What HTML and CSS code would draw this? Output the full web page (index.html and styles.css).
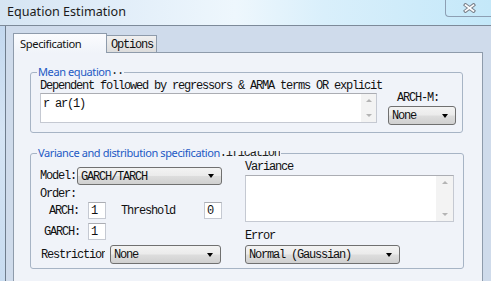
FILE: index.html
```html
<!DOCTYPE html>
<html>
<head>
<meta charset="utf-8">
<link rel="stylesheet" href="styles.css">
</head>
<body>
<div class="window">
  <div class="titlebar">
    <span class="title">Equation Estimation</span>
    <div class="close">
      <svg width="13" height="10" viewBox="0 0 13 10">
        <path d="M2.5 2 L10.5 8 M10.5 2 L2.5 8" stroke="#7a828c" stroke-width="3.6" stroke-linecap="square"/>
        <path d="M2.5 2 L10.5 8 M10.5 2 L2.5 8" stroke="#ffffff" stroke-width="1.6" stroke-linecap="square"/>
      </svg>
    </div>
  </div>
  <div class="frame">
    <div class="frame-left"></div>
    <div class="client">
      <div class="tabs">
        <div class="tab tab-active">Specification</div>
        <div class="tab tab-options mono">Options</div>
      </div>
      <div class="panel">
        <fieldset class="group group-mean">
          <legend>Mean equation<span class="ghost ghost-dots"><span>..</span></span></legend>
          <div class="mean-grid">
            <div class="col">
              <div class="mono line">Dependent followed by regressors &amp; ARMA terms OR explicit</div>
              <div class="textarea ta-mean">
                <div class="ta-text mono">r ar(1)</div>
                <div class="scrollbar"><span class="sb-up"></span><span class="sb-down"></span></div>
              </div>
            </div>
            <div class="col col-archm">
              <div class="mono line archm-label">ARCH-M:</div>
              <div class="select sel-none"><span class="mono sel-text">None</span><span class="arrow"></span></div>
            </div>
          </div>
        </fieldset>
        <fieldset class="group group-var">
          <legend>Variance and distribution specification<span class="ghost ghost-spec"><span>:ification</span></span></legend>
          <div class="var-grid">
            <div class="col col-vleft">
              <div class="row row-model">
                <span class="mono lbl lbl-model">Model:</span>
                <div class="select sel-model"><span class="mono sel-text">GARCH/TARCH</span><span class="arrow"></span></div>
              </div>
              <div class="mono line order">Order:</div>
              <div class="row row-arch">
                <span class="mono lbl lbl-arch">ARCH:</span>
                <div class="input mono">1</div>
                <span class="mono lbl lbl-thr">Threshold</span>
                <div class="input input-thr mono">0</div>
              </div>
              <div class="row row-garch">
                <span class="mono lbl lbl-garch">GARCH:</span>
                <div class="input mono">1</div>
              </div>
              <div class="row row-restr">
                <span class="mono lbl lbl-restr">Restriction</span>
                <div class="select sel-restr"><span class="mono sel-text">None</span><span class="arrow"></span></div>
              </div>
            </div>
            <div class="col col-vright">
              <div class="mono line">Variance</div>
              <div class="textarea ta-var">
                <div class="ta-text mono"></div>
                <div class="scrollbar"><span class="sb-up"></span><span class="sb-down"></span></div>
              </div>
              <div class="mono line err-label">Error</div>
              <div class="select sel-err"><span class="mono sel-text">Normal (Gaussian)</span><span class="arrow"></span></div>
            </div>
          </div>
        </fieldset>
      </div>
    </div>
  </div>
</div>
</body>
</html>
```
FILE: styles.css
```css
* { box-sizing: border-box; }
html, body { margin: 0; padding: 0; }
body {
  width: 491px;
  height: 281px;
  overflow: hidden;
  background: #cfdbeb;
  font-family: "Noto Sans", "Open Sans", sans-serif;
  font-size: 11px;
  color: #000;
}
.mono {
  font-family: "Liberation Mono", serif;
  font-size: 12px;
  letter-spacing: -1.2px;
  line-height: 12px;
  white-space: pre;
  color: #111;
}
.window { width: 491px; height: 281px; display: flex; flex-direction: column; }
.titlebar {
  height: 26px;
  flex: none;
  display: flex;
  align-items: flex-start;
  border-bottom: 1px solid #7d8a99;
  background: linear-gradient(90deg, #d6e5f3 0%, #e2eef9 25%, #eef7fd 48%, #d9effb 66%, #c4e8f9 100%);
}
.title {
  padding-left: 7px;
  line-height: 24px;
  font-size: 12.6px;
  color: #1b1b1b;
}
.close {
  margin-left: auto;
  width: 46px;
  height: 17px;
  border-left: 1px solid #8d9fb3;
  border-bottom: 1px solid #8d9fb3;
  border-bottom-left-radius: 4px;
  display: flex;
  align-items: center;
  justify-content: center;
  padding-left: 2px;
}
.close svg { display: block; }
.frame { flex: 1; display: flex; }
.frame-left {
  width: 6px;
  flex: none;
  background: linear-gradient(180deg, #c3d8ef, #d5e4f4 40%, #c7dbf0);
  border-right: 1px solid #6f7d8d;
}
.client { flex: 1; padding: 7px 0 0 7px; }
.tabs { display: flex; align-items: flex-end; height: 19px; }
.tab {
  border: 1px solid #8e9bab;
  border-bottom: none;
}
.tab-active {
  width: 94px;
  height: 20px;
  margin-bottom: -1px;
  position: relative;
  z-index: 1;
  background: linear-gradient(180deg, #fbfcfe, #f0f3f9);
  padding: 2px 0 0 6px;
  line-height: 15px;
  font-size: 11.2px;
  letter-spacing: -0.4px;
  color: #111;
}
.tab-options {
  width: 50px;
  height: 17px;
  border-left: none;
  background: linear-gradient(180deg, #f0f0f0, #dcdcdc);
  padding: 3px 0 0 4px;
}
.panel {
  width: 470px;
  height: 240px;
  border: 1px solid #8e9bab;
  background: #f0f3f9;
  padding: 11px 0 0 16px;
}
.group {
  margin: 0;
  border: 1px solid #a7b4c5;
  border-radius: 3px;
  min-width: 0;
}
.group legend {
  padding: 0 1px;
  margin-left: -3px;
  line-height: 16px;
  color: #2359c4;
  font-size: 11px;
  letter-spacing: -0.4px;
}
.ghost {
  display: inline-block;
  overflow: hidden;
  vertical-align: top;
  font-family: "Liberation Mono", serif;
  font-size: 12px;
  letter-spacing: -1.2px;
  color: #222;
  white-space: pre;
}
.ghost span { display: block; line-height: 12px; }
.ghost-dots { height: 3px; margin-top: 8px; }
.ghost-dots span { margin-top: -7px; }
.ghost-spec { height: 7px; margin-top: 6px; }
.ghost-spec span { margin-top: -4px; }
.group-mean { width: 433px; padding: 0 6px 7px 9px; }
.group-var { width: 434px; padding: 0 6px 4px 9px; margin-top: 12px; }
.mean-grid { display: grid; grid-template-columns: 337px 68px; column-gap: 11px; }
.col { display: flex; flex-direction: column; }
.line { height: 12px; }
.textarea {
  display: flex;
  background: #fff;
  border: 1px solid #c5c9d2;
  border-top-color: #abadb3;
}
.ta-text { flex: 1; padding: 4px 0 0 2px; }
.ta-mean { height: 30px; margin-top: 1px; }
.scrollbar {
  width: 15px;
  flex: none;
  display: flex;
  flex-direction: column;
  justify-content: space-between;
  align-items: center;
  background: #f3f3f3;
  padding: 5px 0;
}
.sb-up, .sb-down { width: 0; height: 0; border-left: 3px solid transparent; border-right: 3px solid transparent; }
.sb-up { border-bottom: 3px solid #b4b4b4; }
.sb-down { border-top: 3px solid #b4b4b4; }
.archm-label { margin-top: 12px; padding-left: 9px; }
.select {
  display: flex;
  align-items: center;
  justify-content: space-between;
  border: 1px solid #707070;
  border-radius: 3px;
  background: linear-gradient(180deg, #f3f3f3 0%, #ebebeb 48%, #dddddd 52%, #d0d0d0 100%);
  padding: 0 7px 0 3px;
}
.sel-text { padding-top: 1px; }
.arrow {
  width: 0; height: 0;
  border-left: 3.5px solid transparent;
  border-right: 3.5px solid transparent;
  border-top: 4px solid #000;
}
.sel-none { height: 19px; margin-top: 2px; }
.var-grid { display: grid; grid-template-columns: 182px 209px; column-gap: 23px; }
.col-vleft { margin-top: 6px; }
.row { display: flex; align-items: center; }
.lbl { flex: none; }
.lbl-model { width: 37px; }
.sel-model { width: 145px; height: 18px; }
.order { margin-top: 3px; }
.row-arch { margin-top: 2px; height: 17px; }
.lbl-arch { width: 48px; padding-left: 9px; }
.lbl-thr { margin-left: 15px; }
.input {
  width: 18px;
  height: 17px;
  background: #fff;
  border: 1px solid #c5c9d2;
  border-top-color: #abadb3;
  padding: 2px 0 0 2px;
}
.input-thr { margin-left: auto; }
.row-garch { margin-top: 4px; height: 17px; }
.lbl-garch { width: 48px; padding-left: 4px; }
.row-restr { margin-top: 5px; height: 19px; }
.lbl-restr { width: 65px; margin-right: 5px; overflow: hidden; padding-left: 1px; }
.sel-restr { width: 111px; height: 19px; }
.ta-var { height: 47px; margin-top: 2px; }
.ta-var .scrollbar { width: 17px; }
.err-label { margin-top: 8px; }
.sel-err { width: 155px; height: 19px; margin-top: 3px; }
```
